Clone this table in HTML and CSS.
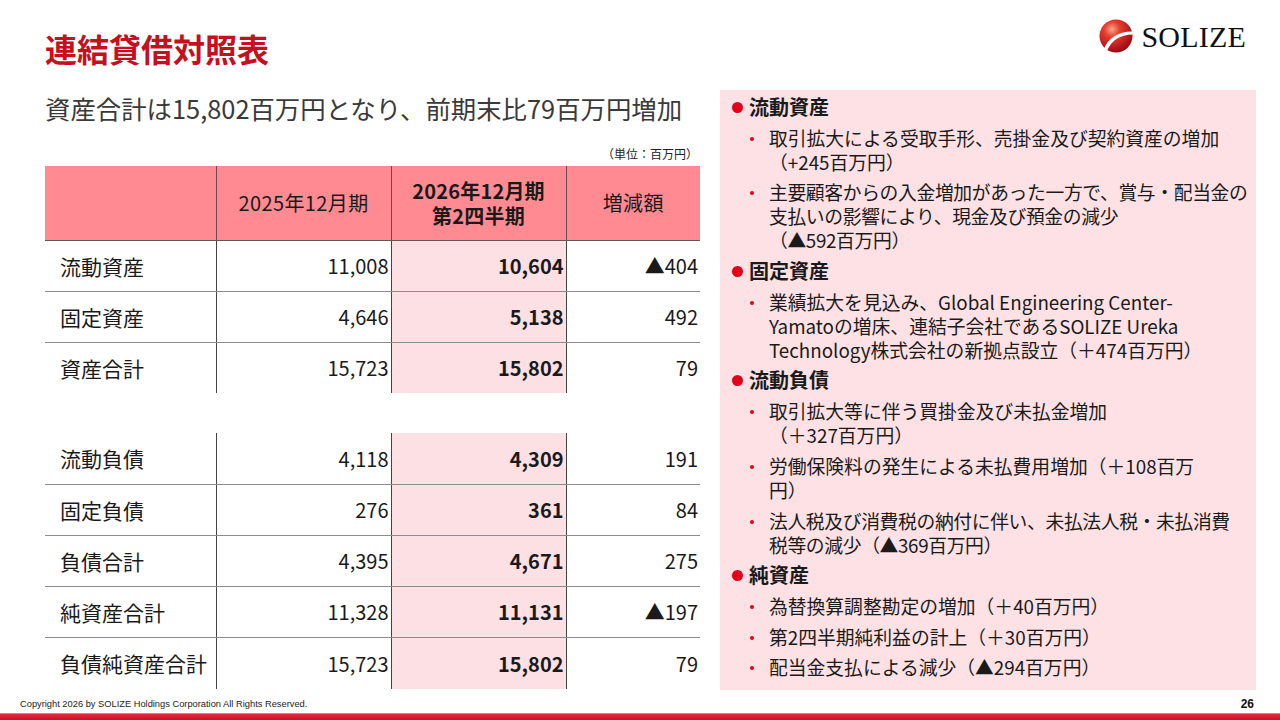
FILE: index.html
```html
<!DOCTYPE html>
<html lang="ja">
<head>
<meta charset="utf-8">
<title>連結貸借対照表</title>
<link rel="stylesheet" href="styles.css">
</head>
<body>
<div class="slide">
  <header class="top">
    <h1 class="title">連結貸借対照表</h1>
    <div class="logo">
      <svg class="logo-mark" width="34" height="34" viewBox="0 0 34 34">
        <defs>
          <radialGradient id="sph" cx="0.38" cy="0.3" r="0.78">
            <stop offset="0" stop-color="#f8a48e"/>
            <stop offset="0.3" stop-color="#e4402f"/>
            <stop offset="0.75" stop-color="#b4141a"/>
            <stop offset="1" stop-color="#7e0a0e"/>
          </radialGradient>
        </defs>
        <circle cx="17" cy="17" r="16.5" fill="url(#sph)"/>
        <path d="M5 29.5 C 9.5 19, 19 12.2, 33.6 12.4 L 33.7 15.6 C 21 15.8, 12.5 21.5, 8.2 31.6 Z" fill="#fff"/>
      </svg>
      <span class="logo-text">SOLIZE</span>
    </div>
  </header>

  <div class="content">
    <section class="left">
      <p class="lead">資産合計は15,802百万円となり、前期末比79百万円増加</p>
      <p class="unit">（単位：百万円）</p>
      <table class="bs">
        <thead>
          <tr>
            <th class="c-label"></th>
            <th>2025年12月期</th>
            <th class="strong">2026年12月期<br>第2四半期</th>
            <th>増減額</th>
          </tr>
        </thead>
        <tbody>
          <tr><td class="c-label">流動資産</td><td>11,008</td><td class="cur">10,604</td><td>▲404</td></tr>
          <tr><td class="c-label">固定資産</td><td>4,646</td><td class="cur">5,138</td><td>492</td></tr>
          <tr class="end"><td class="c-label">資産合計</td><td>15,723</td><td class="cur">15,802</td><td>79</td></tr>
          <tr class="gap"><td colspan="4"></td></tr>
          <tr><td class="c-label">流動負債</td><td>4,118</td><td class="cur">4,309</td><td>191</td></tr>
          <tr><td class="c-label">固定負債</td><td>276</td><td class="cur">361</td><td>84</td></tr>
          <tr><td class="c-label">負債合計</td><td>4,395</td><td class="cur">4,671</td><td>275</td></tr>
          <tr><td class="c-label">純資産合計</td><td>11,328</td><td class="cur">11,131</td><td>▲197</td></tr>
          <tr class="end last"><td class="c-label">負債純資産合計</td><td>15,723</td><td class="cur">15,802</td><td>79</td></tr>
        </tbody>
      </table>
    </section>

    <aside class="notes">
      <h2 class="nh">流動資産</h2>
      <ul class="items">
        <li><span class="t">取引拡大による受取手形、売掛金及び契約資産の増加<br>（+245百万円）</span></li>
        <li><span class="t tight">主要顧客からの入金増加があった一方で、賞与・配当金の<br>支払いの影響により、現金及び預金の減少<br>（▲592百万円）</span></li>
      </ul>
      <h2 class="nh">固定資産</h2>
      <ul class="items">
        <li><span class="t">業績拡大を見込み、Global Engineering Center-<br>Yamatoの増床、連結子会社であるSOLIZE Ureka<br>Technology株式会社の新拠点設立（＋474百万円）</span></li>
      </ul>
      <h2 class="nh">流動負債</h2>
      <ul class="items">
        <li><span class="t">取引拡大等に伴う買掛金及び未払金増加<br>（＋327百万円）</span></li>
        <li><span class="t">労働保険料の発生による未払費用増加（＋108百万<br>円）</span></li>
        <li><span class="t tight">法人税及び消費税の納付に伴い、未払法人税・未払消費<br>税等の減少（▲369百万円）</span></li>
      </ul>
      <h2 class="nh">純資産</h2>
      <ul class="items">
        <li><span class="t">為替換算調整勘定の増加（＋40百万円）</span></li>
        <li><span class="t">第2四半期純利益の計上（＋30百万円）</span></li>
        <li><span class="t">配当金支払による減少（▲294百万円）</span></li>
      </ul>
    </aside>
  </div>

  <footer class="foot">
    <span class="copy">Copyright 2026 by SOLIZE Holdings Corporation All Rights Reserved.</span>
    <span class="page">26</span>
  </footer>
  <div class="bar"></div>
</div>
</body>
</html>
```

FILE: styles.css
```css
* { box-sizing: border-box; }
html, body { margin: 0; padding: 0; background: #fff; }
body {
  font-family: "Noto Sans CJK JP", "Noto Sans", sans-serif;
  color: #1a1a1a;
}
.slide {
  width: 1280px;
  height: 720px;
  display: flex;
  flex-direction: column;
  overflow: hidden;
}

/* header */
.top {
  height: 68px;
  display: flex;
  justify-content: space-between;
  align-items: flex-start;
  padding: 0 34px 0 45px;
}
.title {
  margin: 28px 0 0;
  font-size: 32px;
  line-height: 40px;
  font-weight: 700;
  color: #c4101f;
}
.logo {
  margin-top: 17px;
  display: flex;
  align-items: center;
  gap: 8px;
}
.logo-mark { display: block; }
.logo-text {
  font-family: "Liberation Serif", "Times New Roman", serif;
  font-size: 30px;
  line-height: 34px;
  color: #111;
  letter-spacing: 0.2px;
  padding-top: 3px;
}

/* content */
.content {
  margin-top: 22px;
  height: 600px;
  display: flex;
  padding-left: 45px;
  gap: 20px;
}
.left {
  width: 655px;
  display: flex;
  flex-direction: column;
}
.lead {
  margin: 0;
  font-size: 25.4px;
  line-height: 36px;
  color: #3a3a3a;
  white-space: nowrap;
}
.unit {
  margin: 20px 0 4px;
  font-size: 12px;
  line-height: 16px;
  text-align: right;
  color: #222;
  padding-right: 2px;
}

/* table */
.bs {
  width: 655px;
  border-collapse: collapse;
  table-layout: fixed;
  font-size: 20px;
  color: #1a1a1a;
}
.bs th:nth-child(1), .bs td.c-label { width: 171px; }
.bs th:nth-child(2) { width: 175px; }
.bs th:nth-child(3) { width: 175px; }
.bs th:nth-child(4) { width: 134px; }
.bs thead th {
  height: 74px;
  background: #ff8a91;
  font-weight: 400;
  font-size: 20px;
  line-height: 25px;
  text-align: center;
  border-right: 1px solid #6a4a4c;
  border-bottom: 1px solid #5a5a5a;
  padding: 0;
  letter-spacing: 0.4px;
}
.bs thead th:last-child { border-right: none; }
.bs thead th.strong { font-weight: 700; letter-spacing: 0.2px; }
.bs tbody td {
  height: 51px;
  padding: 0 2px 0 0;
  text-align: right;
  border-right: 1px solid #444;
  border-bottom: 1px solid #8c8c8c;
  white-space: nowrap;
}
.bs tbody td:last-child { border-right: none; }
.bs tbody td.c-label {
  text-align: left;
  padding: 0 0 0 15px;
  font-size: 21px;
}
.bs tbody td.cur {
  background: #fde0e3;
  font-weight: 700;
}
.bs tbody tr.end td { border-bottom: none; }
.bs tbody tr.last td { height: 52px; }
.bs tbody tr.gap td {
  height: 40px;
  border: none;
  padding: 0;
  background: transparent;
}

/* notes panel */
.notes {
  width: 536px;
  background: #fde1e4;
  padding: 5px 0 0 12px;
  font-size: 18.8px;
  line-height: 24px;
  color: #1a1a1a;
}
.nh {
  margin: 0;
  display: flex;
  align-items: center;
  font-size: 20px;
  line-height: 24px;
  font-weight: 700;
}
.nh::before {
  content: "";
  width: 11px;
  height: 11px;
  border-radius: 50%;
  background: #e3001b;
  margin-right: 6px;
  flex: 0 0 11px;
}
.items {
  list-style: none;
  margin: 0;
  padding: 0;
}
.items li {
  display: flex;
  margin-top: 6.7px;
}
.items + .nh { margin-top: 6.7px; }
.items li::before {
  content: "";
  flex: 0 0 4px;
  width: 4px;
  height: 4px;
  border-radius: 50%;
  background: #e3001b;
  margin: 11px 15px 0 18px;
}
.items .t { white-space: nowrap; }
.items .tight { letter-spacing: -0.35px; }

/* footer */
.foot {
  height: 23px;
  display: flex;
  justify-content: space-between;
  align-items: flex-start;
  padding: 8px 26px 0 20px;
}
.copy {
  font-family: "Liberation Sans", Arial, sans-serif;
  font-size: 9.3px;
  line-height: 12px;
  color: #222;
}
.page {
  font-family: "Liberation Sans", Arial, sans-serif;
  font-size: 12px;
  line-height: 12px;
  font-weight: 700;
  color: #111;
}
.bar {
  height: 7px;
  background: linear-gradient(#f0a0a8 0, #e2283c 1.5px, #cc0f26 100%);
}
```
